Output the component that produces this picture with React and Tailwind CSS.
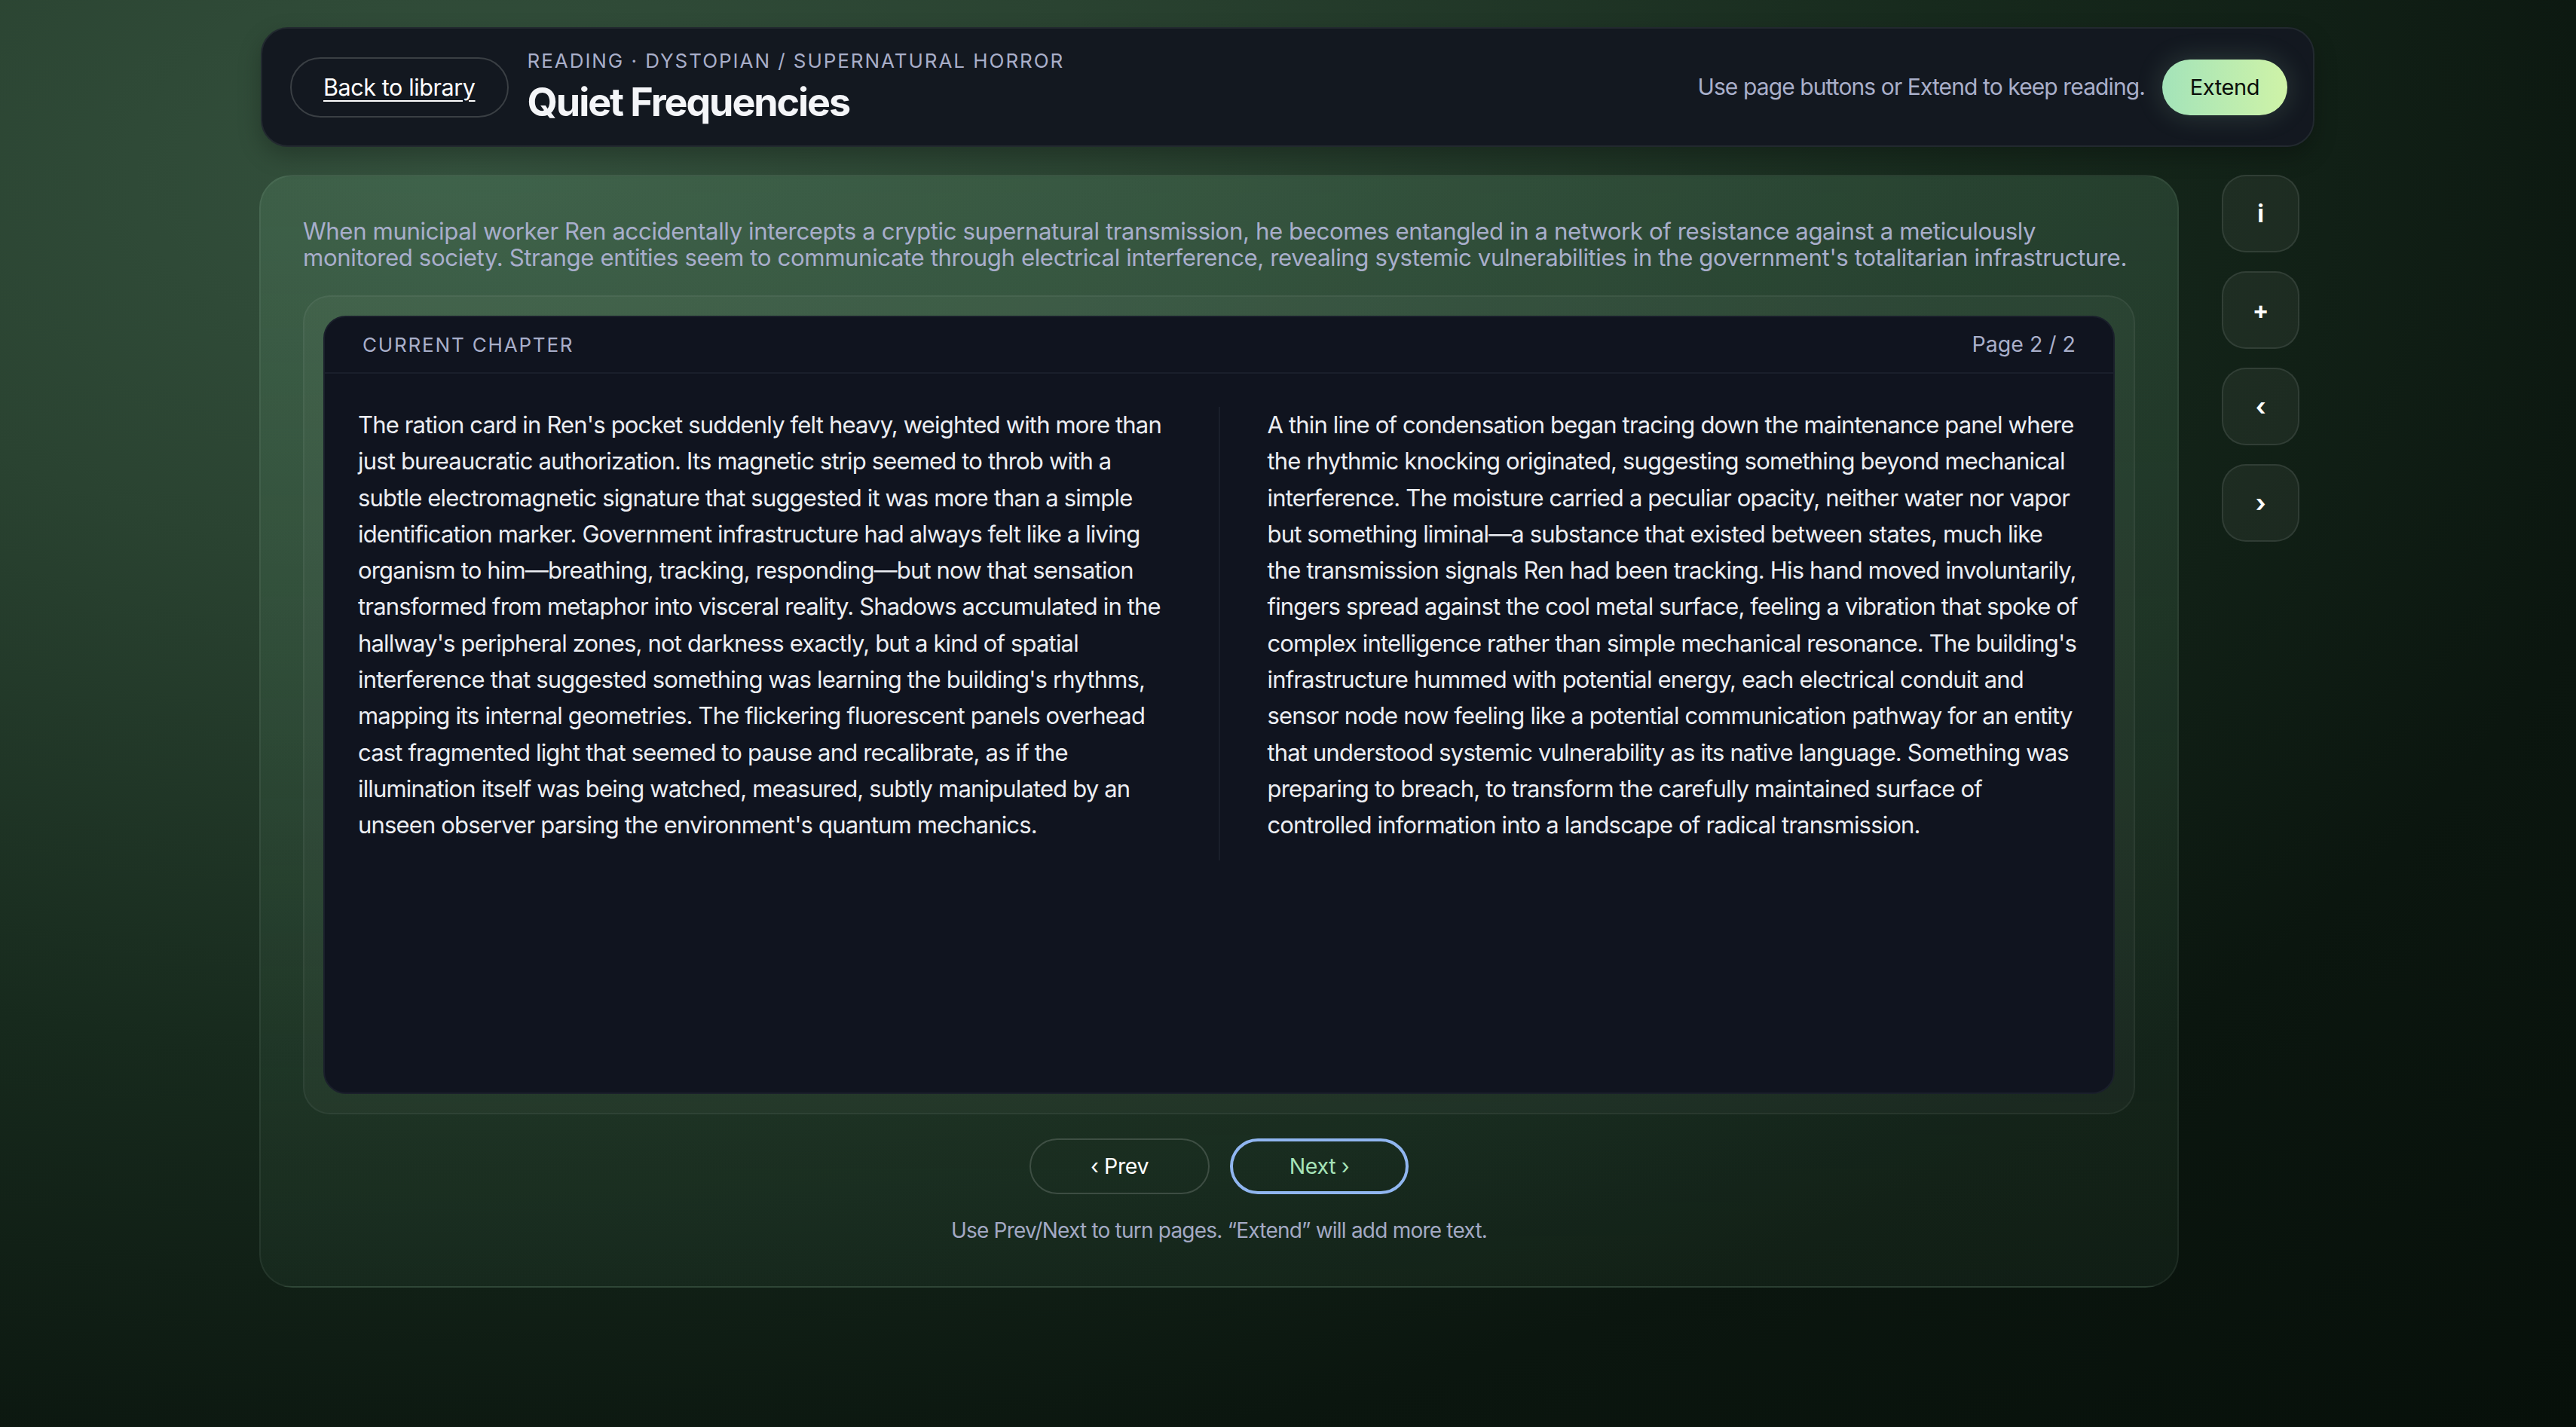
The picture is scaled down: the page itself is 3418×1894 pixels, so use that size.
import React from "react";

const synopsis = [
  "When municipal worker Ren accidentally intercepts a cryptic supernatural transmission, he becomes entangled in a network of resistance against a meticulously",
  "monitored society. Strange entities seem to communicate through electrical interference, revealing systemic vulnerabilities in the government's totalitarian infrastructure.",
];

const leftLines = [
  "The ration card in Ren's pocket suddenly felt heavy, weighted with more than",
  "just bureaucratic authorization. Its magnetic strip seemed to throb with a",
  "subtle electromagnetic signature that suggested it was more than a simple",
  "identification marker. Government infrastructure had always felt like a living",
  "organism to him—breathing, tracking, responding—but now that sensation",
  "transformed from metaphor into visceral reality. Shadows accumulated in the",
  "hallway's peripheral zones, not darkness exactly, but a kind of spatial",
  "interference that suggested something was learning the building's rhythms,",
  "mapping its internal geometries. The flickering fluorescent panels overhead",
  "cast fragmented light that seemed to pause and recalibrate, as if the",
  "illumination itself was being watched, measured, subtly manipulated by an",
  "unseen observer parsing the environment's quantum mechanics.",
];

const rightLines = [
  "A thin line of condensation began tracing down the maintenance panel where",
  "the rhythmic knocking originated, suggesting something beyond mechanical",
  "interference. The moisture carried a peculiar opacity, neither water nor vapor",
  "but something liminal—a substance that existed between states, much like",
  "the transmission signals Ren had been tracking. His hand moved involuntarily,",
  "fingers spread against the cool metal surface, feeling a vibration that spoke of",
  "complex intelligence rather than simple mechanical resonance. The building's",
  "infrastructure hummed with potential energy, each electrical conduit and",
  "sensor node now feeling like a potential communication pathway for an entity",
  "that understood systemic vulnerability as its native language. Something was",
  "preparing to breach, to transform the carefully maintained surface of",
  "controlled information into a landscape of radical transmission.",
];

function Lines({ lines }) {
  return lines.map((line, i) => (
    <React.Fragment key={i}>
      {line}
      {i < lines.length - 1 && <br />}
    </React.Fragment>
  ));
}

const sideButtons = ["i", "+", "‹", "›"];

export default function App() {
  return (
    <div className="min-h-screen w-full bg-[#08110b] bg-[radial-gradient(ellipse_at_18%_12%,#34513d_0%,#2a4331_22%,#172a1d_50%,#0b160f_75%,#07100a_100%)] pt-[36px] font-[Inter,sans-serif] tracking-[-0.025em]">
      <div className="ml-[344px] w-[2727px]">
        {/* top bar */}
        <header className="ml-[2px] flex h-[159px] items-center rounded-[36px] border-2 border-[#22292f] bg-[#131820] pl-[37px] pr-[34px] shadow-[0_12px_30px_rgba(0,0,0,0.25)]">
          <button className="h-[80px] whitespace-nowrap rounded-full border-2 border-[#3a3f44] px-[42px] text-[30.5px] text-white underline decoration-2 underline-offset-[6px]">
            Back to library
          </button>
          <div className="ml-[25px] flex flex-col">
            <div className="whitespace-nowrap text-[26px] leading-[30px] tracking-[0.075em] text-[#a9afca]">
              READING · DYSTOPIAN / SUPERNATURAL HORROR
            </div>
            <h1 className="mt-[10px] whitespace-nowrap text-[52px] font-bold leading-[60px] tracking-[-0.04em] text-[#f4f5f8]">
              Quiet Frequencies
            </h1>
          </div>
          <div className="ml-auto flex items-center gap-[23px]">
            <span className="whitespace-nowrap text-[30px] tracking-[-0.03em] text-[#a9afca]">
              Use page buttons or Extend to keep reading.
            </span>
            <button className="h-[74px] w-[166px] rounded-full bg-gradient-to-r from-[#a3e3b9] to-[#cff3a7] text-[29px] text-[#0a0f0a] shadow-[0_0_36px_rgba(170,230,190,0.18)]">
              Extend
            </button>
          </div>
        </header>

        <div className="mt-[37px] flex items-start gap-[57px]">
          <main className="w-[2547px] rounded-[44px] border-2 border-[rgba(255,255,255,0.06)] bg-[linear-gradient(180deg,rgba(110,170,130,0.2),rgba(110,170,130,0.07))] px-[56px] pb-[54px] pt-[56px]">
            <p className="whitespace-nowrap text-[31.2px] leading-[35px] text-[#a8aecb]">
              <Lines lines={synopsis} />
            </p>

            {/* chapter frame */}
            <section className="mt-[32px] rounded-[36px] border-2 border-[rgba(255,255,255,0.05)] bg-[rgba(255,255,255,0.03)] p-[25px]">
              <div className="flex h-[1033px] flex-col rounded-[30px] border-2 border-[#1a1f2b] bg-[#10141f]">
                <div className="flex h-[75px] items-center justify-between border-b-2 border-[#1a1f2b] px-[50px]">
                  <span className="text-[26px] tracking-[0.07em] text-[#a9afca]">
                    CURRENT CHAPTER
                  </span>
                  <span className="text-[28.5px] tracking-normal text-[#a9afca]">Page 2 / 2</span>
                </div>
                <div className="grid grid-cols-[1fr_2px_1fr] items-start gap-x-[63px] px-[44px] pt-[44px]">
                  <p className="whitespace-nowrap text-[31px] leading-[48.3px] tracking-[-0.027em] text-[#eceef3]">
                    <Lines lines={leftLines} />
                  </p>
                  <div className="h-[602px] bg-[#1a1f2b]" />
                  <p className="whitespace-nowrap text-[31px] leading-[48.3px] tracking-[-0.027em] text-[#eceef3]">
                    <Lines lines={rightLines} />
                  </p>
                </div>
              </div>
            </section>

            <div className="mt-[32px] flex justify-center gap-[27px]">
              <button className="h-[74px] w-[239px] rounded-full border-2 border-[rgba(255,255,255,0.16)] text-[28.5px] text-white">
                ‹ Prev
              </button>
              <button className="h-[74px] w-[237px] rounded-full border-[4px] border-[#90b6f0] text-[28.5px] text-[#a6e3b8]">
                Next ›
              </button>
            </div>
            <p className="mt-[28px] text-center text-[28px] leading-[40px] tracking-[-0.028em] text-[#a3a9c4]">
              Use Prev/Next to turn pages. “Extend” will add more text.
            </p>
          </main>

          <div className="flex flex-col gap-[25px]">
            {sideButtons.map((label) => (
              <button
                key={label}
                className="flex h-[103px] w-[103px] items-center justify-center rounded-[32px] border-2 border-[rgba(255,255,255,0.09)] bg-[rgba(255,255,255,0.05)] text-[32px] font-bold text-white"
              >
                {label}
              </button>
            ))}
          </div>
        </div>
      </div>
    </div>
  );
}
